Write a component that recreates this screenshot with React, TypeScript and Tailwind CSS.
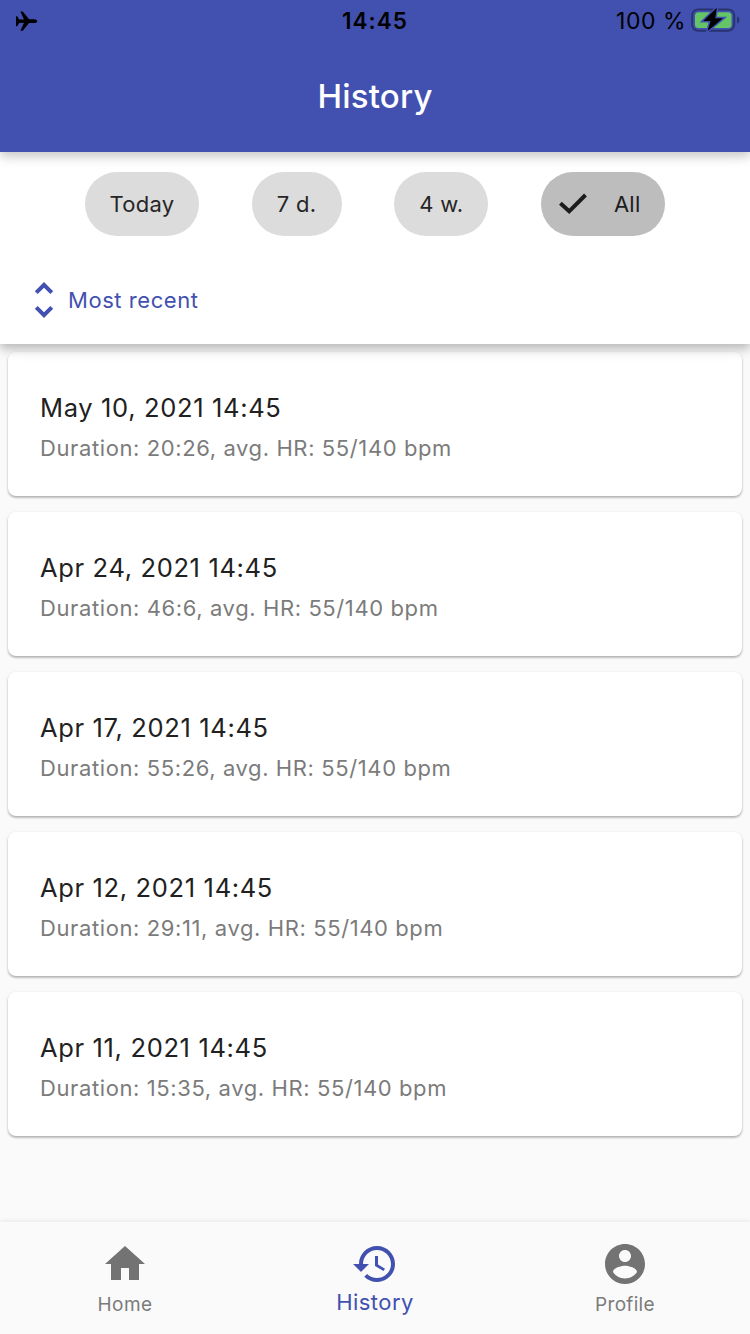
const workouts = [
  { date: "May 10, 2021 14:45", detail: "Duration: 20:26, avg. HR: 55/140 bpm" },
  { date: "Apr 24, 2021 14:45", detail: "Duration: 46:6, avg. HR: 55/140 bpm" },
  { date: "Apr 17, 2021 14:45", detail: "Duration: 55:26, avg. HR: 55/140 bpm" },
  { date: "Apr 12, 2021 14:45", detail: "Duration: 29:11, avg. HR: 55/140 bpm" },
  { date: "Apr 11, 2021 14:45", detail: "Duration: 15:35, avg. HR: 55/140 bpm" },
];

const icons = {
  home: "M10 20v-6h4v6h5v-8h3L12 3 2 12h3v8z",
  history:
    "M13 3c-4.97 0-9 4.03-9 9H1l3.89 3.89.07.14L9 12H6c0-3.87 3.13-7 7-7s7 3.13 7 7-3.13 7-7 7c-1.93 0-3.68-.79-4.94-2.06l-1.42 1.42C8.27 19.99 10.51 21 13 21c4.97 0 9-4.03 9-9s-4.03-9-9-9zm-1 5v5l4.28 2.54.72-1.21-3.5-2.08V8H12z",
  profile:
    "M12 2C6.48 2 2 6.48 2 12s4.48 10 10 10 10-4.48 10-10S17.52 2 12 2zm0 3c1.66 0 3 1.34 3 3s-1.34 3-3 3-3-1.34-3-3 1.34-3 3-3zm0 14.2c-2.5 0-4.71-1.28-6-3.22.03-1.99 4-3.08 6-3.08 1.99 0 5.97 1.09 6 3.08-1.29 1.94-3.5 3.22-6 3.22z",
  sort: "M12 5.83L15.17 9l1.41-1.41L12 3 7.41 7.59 8.83 9 12 5.83zm0 12.34L8.83 15l-1.41 1.41L12 21l4.59-4.59L15.17 15 12 18.17z",
};

function Icon({ d, className }: { d: string; className: string }) {
  return (
    <svg viewBox="0 0 24 24" fill="currentColor" className={className}>
      <path d={d} />
    </svg>
  );
}

function StatusBar() {
  return (
    <div className="grid h-10 grid-cols-3 items-center pt-px text-black">
      <svg viewBox="0 0 22 20" className="ml-4 h-5 w-[22px]" fill="currentColor">
        <path d="M0 5.200h1.200L3.200 8.500 8 8.600 4.400.6h2.300l6.400 7.700h5.200c1.700 0 2.900.9 2.900 1.900s-1.200 1.900-2.900 1.900h-5.200L6.700 19.700H4.400L8 11.800l-4.800.1-2 3.300H0z" />
      </svg>
      <div className="text-center text-[22.5px] leading-10 font-semibold tracking-[1px]">14:45</div>
      <div className="flex items-center justify-end gap-1 pr-[10px]">
        <span className="text-[23px] leading-10 tracking-[0.5px] whitespace-nowrap">100 %</span>
        <svg viewBox="0 0 50 26" className="-mt-0.5 h-[26px] w-[50px]">
          <rect x="2.200" y="2.400" width="42" height="21.400" rx="6" fill="none" stroke="#29336f" strokeWidth="2" />
          <path d="M47 9.500c1.700.5 2.400 1.800 2.400 3.500s-.7 3-2.400 3.500z" fill="#29336f" />
          <rect x="5" y="5.300" width="36.500" height="15.800" rx="3.500" fill="#65c466" />
          <path d="M26.800.8 13.200 14h7.400l-3 10L33 11.300h-7.800z" fill="#000" stroke="#4251af" strokeWidth="3" paintOrder="stroke" />
        </svg>
      </div>
    </div>
  );
}

function Chip({ label, className }: { label: string; className: string }) {
  return (
    <button className={"flex h-16 items-center justify-center rounded-full bg-[#dcdcdc] text-[22px] text-[#262626] " + className}>
      {label}
    </button>
  );
}

export default function App() {
  return (
    <div className="flex h-[1334px] w-[750px] flex-col overflow-hidden bg-[#fafafa] font-['Inter','Liberation_Sans',sans-serif]">
      <header className="relative z-20 h-[152px] shrink-0 bg-[#4251af] shadow-[0_4px_8px_rgba(0,0,0,0.13),0_8px_10px_rgba(0,0,0,0.05),0_2px_20px_rgba(0,0,0,0.05)]">
        <StatusBar />
        <h1 className="text-center text-[33px] leading-[112px] font-medium tracking-[0.2px] text-white">History</h1>
      </header>

      <section className="relative z-10 h-48 shrink-0 bg-white shadow-[0_4px_8px_rgba(0,0,0,0.16),0_8px_10px_rgba(0,0,0,0.07),0_2px_20px_rgba(0,0,0,0.06)]">
        <div className="flex justify-center gap-[52.67px] pt-5">
          <Chip label="Today" className="w-[114px] tracking-[0.3px]" />
          <Chip label="7 d." className="w-[90px] tracking-[0.3px]" />
          <Chip label="4 w." className="w-[94px] tracking-[0.3px]" />
          <button className="flex h-16 w-[124px] items-center rounded-full bg-[#bdbdbd] pl-[18px] text-[#1c1c1c]">
            <svg viewBox="0 0 28 22" className="h-[22px] w-7" fill="none" stroke="currentColor" strokeWidth="4">
              <path d="M1.400 10.300 10.200 18.300 26.500 2" />
            </svg>
            <span className="ml-[27px] text-[22px] tracking-[0.2px]">All</span>
          </button>
        </div>
        <div className="mt-10 flex h-12 items-center pl-5 text-[#4251af]">
          <Icon d={icons.sort} className="h-12 w-12" />
          <span className="text-[22px] tracking-[0.55px]">Most recent</span>
        </div>
      </section>

      <main className="flex flex-1 flex-col gap-4 px-2 pt-2">
        {workouts.map((w) => (
          <article
            key={w.date}
            className="flex h-36 shrink-0 flex-col rounded-lg bg-white px-8 pt-10 shadow-[0_2px_2px_rgba(0,0,0,0.18),0_1px_3px_rgba(0,0,0,0.16)]"
          >
            <h2 className="text-[25.5px] leading-8 tracking-[0.65px] text-[#212121]">{w.date}</h2>
            <p className="mt-2 text-[22px] leading-8 tracking-[0.6px] text-[#7b7b7b]">{w.detail}</p>
          </article>
        ))}
      </main>

      <nav className="grid h-28 shrink-0 grid-cols-3 bg-[#fafafa] text-[#737373] shadow-[0_-1px_5px_rgba(0,0,0,0.08)]">
        <div className="flex flex-col items-center pt-[18px]">
          <Icon d={icons.home} className="h-12 w-12" />
          <span className="mt-[5px] text-[19px] leading-6 tracking-[0.4px] text-[#7b7b7b]">Home</span>
        </div>
        <div className="flex flex-col items-center pt-[18px] text-[#4251af]">
          <Icon d={icons.history} className="h-12 w-12" />
          <span className="mt-0.5 text-[22px] leading-6 tracking-[0.45px]">History</span>
        </div>
        <div className="flex flex-col items-center pt-[18px]">
          <Icon d={icons.profile} className="h-12 w-12" />
          <span className="mt-[5px] text-[19px] leading-6 tracking-[0.3px] text-[#7b7b7b]">Profile</span>
        </div>
      </nav>
    </div>
  );
}
